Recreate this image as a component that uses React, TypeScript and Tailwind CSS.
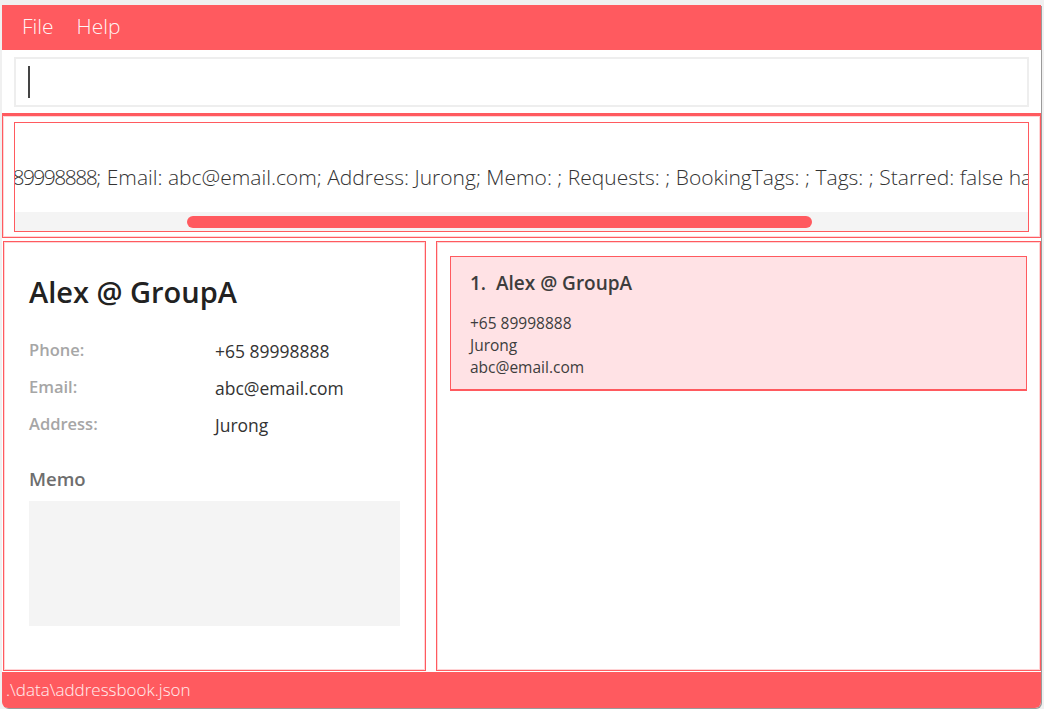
const fields = [
  { label: "Phone:", value: "+65 89998888" },
  { label: "Email:", value: "abc@email.com" },
  { label: "Address:", value: "Jurong" },
];

const App = () => {
  return (
    <div className="w-[1044px] h-[709px] bg-[#f0f0f0] pt-[5px] pl-[2px] overflow-hidden" style={{ fontFamily: '"Open Sans", "Noto Sans", sans-serif' }}>
      <div className="w-[1039px] h-[703px] flex flex-col bg-white rounded-b-[6px] overflow-hidden shadow-[1px_1px_0_#9a9a9a]">
        {/* menu bar */}
        <div className="h-[45px] shrink-0 bg-[#ff5a5f] flex items-center gap-[23px] pl-[20px] pb-[2px] text-[21px] font-light text-white/95">
          <span>File</span>
          <span>Help</span>
        </div>

        {/* command box */}
        <div className="h-[65px] shrink-0 px-[12px] pt-[7px] border-b-2 border-[#ff5a5f]">
          <div className="h-[50px] border-2 border-[#eeeeee] flex items-center pl-[12px]">
            <div className="w-[2px] h-[32px] bg-[#444]" />
          </div>
        </div>

        {/* result display, scrolled sideways */}
        <div className="h-[123px] shrink-0 border border-[#ff5a5f] shadow-[inset_0_0_0_1px_#ffd4d6] px-[11px] pt-[6px] pb-[4px]">
          <div className="h-[110px] border border-[#ff5a5f] flex flex-col overflow-hidden">
            <div className="flex-1 flex items-center overflow-hidden">
              <span className="whitespace-nowrap text-[21px] font-light text-[#333] ml-[-452px] pt-[20px]">
                New person added: Alex @ GroupA; Phone: <span className="tracking-[-1.5px]">+65 89998888</span>; Email: abc@email.com; Address: Jurong; Memo: ; Requests: ; BookingTags: ; Tags: ; Starred: false has been added
              </span>
            </div>
            <div className="h-[19px] bg-[#f4f4f4] flex items-center">
              <div className="ml-[172px] w-[625px] h-[12px] rounded-[6px] bg-[#ff5a5f]" />
            </div>
          </div>
        </div>

        {/* lower panels */}
        <div className="flex-1 flex gap-[10px] pt-[3px] pl-[1px] pb-[1px]">
          <div className="w-[423px] border border-[#ff5a5f] shadow-[inset_0_0_0_1px_#ffd4d6] px-[25px] pt-[32px]">
            <h1 className="text-[29px] font-semibold text-[#222] leading-[36px]">Alex @ GroupA</h1>
            <div className="mt-[29px] flex flex-col gap-[12px]">
              {fields.map((f) => (
                <div key={f.label} className="flex items-center h-[25px]">
                  <span className="w-[186px] text-[16.5px] font-semibold text-[#a6a6a6] -mt-[2px]">{f.label}</span>
                  <span className="text-[17.5px] text-[#333]">{f.value}</span>
                </div>
              ))}
            </div>
            <h2 className="mt-[27px] text-[18.5px] font-semibold text-[#6e6e6e] leading-[28px]">Memo</h2>
            <div className="mt-[8px] h-[125px] w-[371px] bg-[#f4f4f4]" />
          </div>

          <div className="flex-1 border border-[#ff5a5f] shadow-[inset_0_0_0_1px_#ffd4d6] px-[13px] pt-[14px]">
            <div className="bg-[#ffe2e5] border border-[#ff5a5f] border-b-2 pl-[19px] pt-[13px] pb-[11px]">
              <div className="text-[19px] font-semibold text-[#3d3d3d] leading-[26px]">
                1.&nbsp; Alex @ GroupA
              </div>
              <div className="mt-[16px] text-[15.5px] text-[#3d3d3d] leading-[22px]">
                <div>+65 89998888</div>
                <div>Jurong</div>
                <div>abc@email.com</div>
              </div>
            </div>
          </div>
        </div>

        {/* status bar */}
        <div className="h-[36px] shrink-0 bg-[#ff5a5f] flex items-center pl-[4px] text-[17px] font-light text-white/90">
          .\data\addressbook.json
        </div>
      </div>
    </div>
  );
};

export default App;
